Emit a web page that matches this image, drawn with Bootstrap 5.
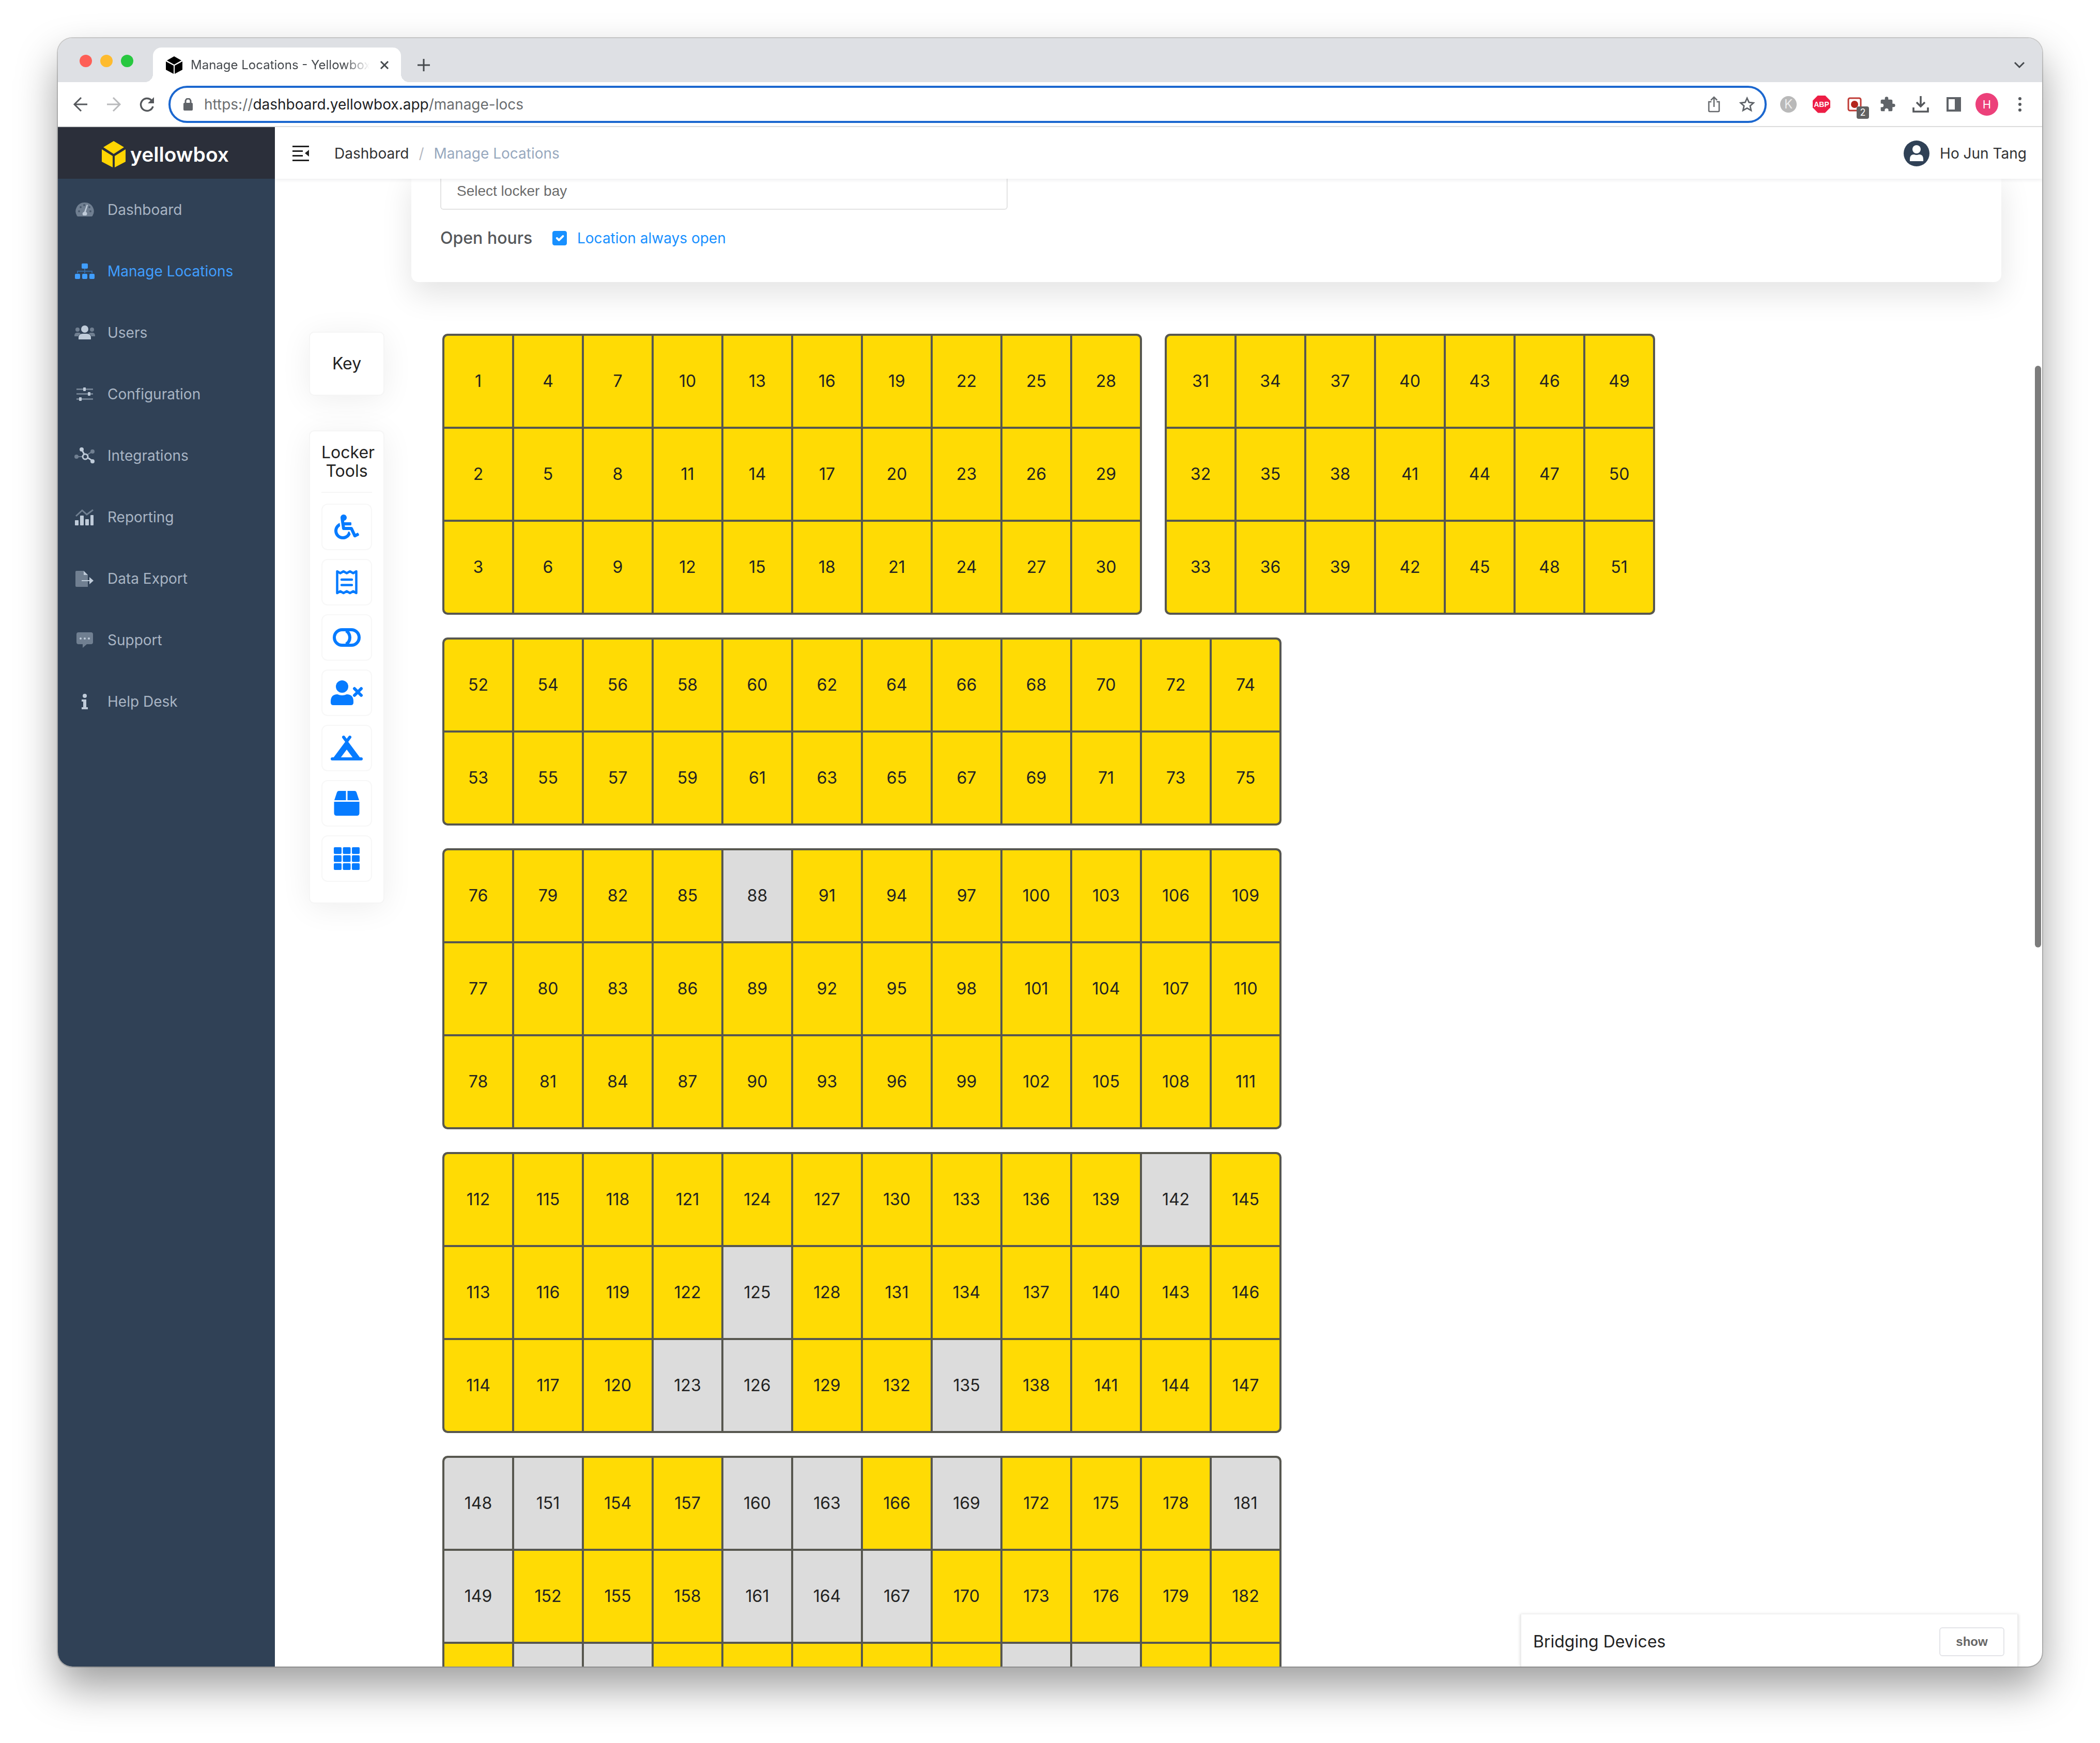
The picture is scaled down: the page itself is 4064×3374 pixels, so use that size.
<!DOCTYPE html>
<html lang="en">
<head>
<meta charset="utf-8">
<meta name="viewport" content="width=device-width, initial-scale=1">
<title>Manage Locations - Yellowbox</title>
<link href="https://cdn.jsdelivr.net/npm/bootstrap@5.3.0/dist/css/bootstrap.min.css" rel="stylesheet">
<style>
  body { font-family: Inter, "Liberation Sans", sans-serif; font-size: 28px; line-height: 36px; color: #303133; background: #fff; }
  svg { display: block; flex: none; }
  button { color: inherit; }
  .desk { height: 100vh; padding: 74px 112px 148px; }
  .win { height: 100%; border-radius: 28px; background: #fff; box-shadow: 0 0 0 2px rgba(0,0,0,.18), 0 40px 80px rgba(0,0,0,.38); }

  /* browser chrome */
  .tabstrip { height: 85px; background: #dee0e4; padding: 18px 26px 0 42px; }
  .lights { gap: 16px; width: 142px; padding-top: 14px; }
  .lights i { width: 24px; height: 24px; border-radius: 50%; }
  .light-close { background: #fe5f57; }
  .light-min { background: #febb2e; }
  .light-max { background: #28c840; }
  .tab { width: 480px; height: 67px; padding: 0 20px 0 25px; background: #fff; border-radius: 16px 16px 0 0; font-size: 24px; color: #45494d; }
  .tab::before, .tab::after { content: ""; position: absolute; bottom: 0; width: 16px; height: 16px; }
  .tab::before { left: -16px; background: radial-gradient(circle at 0 0, transparent 16px, #fff 16px); }
  .tab::after { right: -16px; background: radial-gradient(circle at 100% 0, transparent 16px, #fff 16px); }
  .tab-title { width: 346px; margin-left: 16px; white-space: nowrap; -webkit-mask-image: linear-gradient(90deg, #000 86%, transparent); mask-image: linear-gradient(90deg, #000 86%, transparent); }
  .plain { border: 0; background: none; padding: 0; display: flex; align-items: center; justify-content: center; }
  .newtab { width: 88px; height: 67px; }
  .tabsearch { width: 36px; height: 67px; }
  .toolbar { height: 87px; border-bottom: 2px solid #dcdcdc; }
  .navbtns { width: 214px; padding-left: 28px; gap: 32px; }
  .navbtns .plain { width: 32px; }
  .omnibox { height: 72px; border: 4px solid #1b67cf; border-radius: 36px; padding: 0 2px 0 25px; color: #6a6d70; }
  .omnibox b { font-weight: 400; color: #202124; }
  .omnibox .url { margin-left: 22px; }
  .exts { padding: 0 11px 0 10px; }
  .cell64 { width: 64px; height: 64px; position: relative; display: flex; align-items: center; justify-content: center; flex: none; }
  .kbadge { width: 32px; height: 32px; border-radius: 50%; background: #b9b9b9; color: #eee; font-size: 24px; text-align: center; line-height: 32px; }
  .abp { width: 34px; height: 34px; background: #ed1e45; color: #fff; font: bold 14px/34px "Liberation Sans", sans-serif; text-align: center; clip-path: polygon(30% 0,70% 0,100% 30%,100% 70%,70% 100%,30% 100%,0 70%,0 30%); }
  .cnt { position: absolute; left: 36px; top: 36px; width: 24px; height: 24px; border-radius: 4px; background: #616161; color: #fff; font-size: 18px; line-height: 24px; text-align: center; }
  .avatar-h { width: 44px; height: 44px; border-radius: 50%; background: #ec407a; color: #fff; font-size: 22px; line-height: 44px; text-align: center; }

  /* application */
  .appbody, .appmain, .scrolled { min-height: 0; min-width: 0; }
  .side { width: 420px; background: #304156; }
  .brand { height: 100px; background: #2b2f3a; color: #fff; font-size: 39px; font-weight: 600; padding: 6px 0 0 84px; gap: 8px; }
  .side a.item { height: 119px; padding-left: 32px; gap: 24px; color: #a9b5c4; text-decoration: none; }
  .side a.item.active { color: #409eff; }
  .dim { opacity: .45; }
  .topbar { height: 100px; padding: 2px 30px 0 34px; background: #fff; z-index: 2; box-shadow: 0 2px 8px rgba(0,21,41,.08); }
  .topbar a { color: #303133; text-decoration: none; }
  .user { gap: 20px; }
  .crumbs { margin-left: 49px; gap: 19px; }
  .crumbs .sep { color: #b5b9c2; }
  .crumbs .here { color: #97a8be; }
  .shade { box-shadow: 0 8px 60px rgba(0,0,0,.07); border: 2px solid #f5f5f5; background: #fff; border-radius: 10px; }
  .scrolled { margin-top: -16px; }
  .settings { margin: 0 79px 0 264px; padding: 0 56px 66px; border-radius: 14px; border: 0; box-shadow: 0 24px 60px rgba(0,0,0,.11); }
  .bay { width: 1098px; max-width: 100%; height: 76px; border: 2px solid #e3e3e3; border-radius: 6px; padding: 4px 30px 0; font: 28px/36px "Liberation Sans", sans-serif; color: #606266; }
  .bay::placeholder { color: #6b6b6b; opacity: 1; }
  .open { padding-top: 36px; box-sizing: content-box; height: 38px; }
  .open-title { font-size: 32px; color: #55575a; width: 217px; font-weight: 500; }
  .form-check-input.always { width: 28px; height: 28px; margin: 0 20px 0 0; border-radius: 4px; flex: none; }
  .form-check-input.always:checked { background-color: #1890ff; border-color: #1890ff; }
  .always-label { color: #1890ff; }
  .board { padding: 96px 66px 0; gap: 112px; }
  .rail { width: 146px; color: #222; font-size: 32px; text-align: center; flex: none; gap: 67px; }
  .keycard { height: 124px; line-height: 120px; }
  .tools { padding: 23px 22px 40px; }
  .tools-title { line-height: 36px; padding-bottom: 22px; border-bottom: 2px solid #f5f5f5; margin-bottom: 21px; }
  .tools .stack { gap: 17px; }
  .tool { height: 90px; background: #fff; border: 2px solid #f7f7f7; border-radius: 12px; color: #067bff; padding: 0; }
  .bays { padding-top: 4px; gap: 44px; }
  .bayrow { gap: 44px; }
  .bank { display: grid; grid-auto-flow: column; grid-auto-columns: 131px; grid-auto-rows: 176px; gap: 4px; padding: 4px; background: #57574f; border-radius: 10px; }
  .locker { background: #ffdb04; color: #222; font-size: 32px; display: flex; align-items: center; justify-content: center; }
  .locker.off { background: #dcdcdc; }
  .bank .locker.tl { border-top-left-radius: 7px; } .bank .locker.bl { border-bottom-left-radius: 7px; }
  .bank .locker.tr { border-top-right-radius: 7px; } .bank .locker.br { border-bottom-right-radius: 7px; }
  .bridging { position: absolute; right: 46px; bottom: 0; width: 964px; height: 101px; padding: 4px 25px 0 23px; background: #fff; border: solid #ececec; border-width: 0 2px; box-shadow: 0 0 6px rgba(0,0,0,.15); font-size: 32px; color: #222; z-index: 3; }
  .show-btn { width: 126px; height: 56px; border: 2px solid #e3e4e8; border-radius: 6px; background: #fff; color: #666; font: bold 24px/28px "Liberation Sans", sans-serif; }
  .thumb { position: absolute; right: 2px; top: 462px; width: 12px; height: 1126px; border-radius: 6px; background: #7c7c7c; z-index: 3; }
</style>
</head>
<body>
<div class="desk">
<div class="win d-flex flex-column overflow-hidden">

  <div class="tabstrip d-flex flex-shrink-0">
    <div class="lights d-flex"><i class="light-close"></i><i class="light-min"></i><i class="light-max"></i></div>
    <div class="tab position-relative d-flex align-items-center">
      <svg width="32" height="34" viewBox="0 0 32 34"><path d="M16 0 30 8 16 16 2 8ZM0 10l15 8v16L0 26ZM32 10l-15 8v16l15-8Z" fill="#000"/></svg>
      <div class="tab-title">Manage Locations - Yellowbox</div>
      <button class="plain ms-auto" aria-label="Close tab"><svg width="24" height="24" viewBox="0 0 24 24" stroke="#45494d" stroke-width="3"><path d="M5 5l14 14M19 5 5 19"/></svg></button>
    </div>
    <button class="plain newtab" aria-label="New tab"><svg width="26" height="26" viewBox="0 0 26 26" stroke="#45494d" stroke-width="3"><path d="M13 1v24M1 13h24"/></svg></button>
    <button class="plain tabsearch ms-auto" aria-label="Search tabs"><svg width="24" height="24" viewBox="0 0 24 24" fill="none" stroke="#45494d" stroke-width="3"><path d="M3 7l9 9 9-9"/></svg></button>
  </div>

  <div class="toolbar d-flex align-items-center flex-shrink-0">
    <div class="navbtns d-flex">
      <button class="plain" aria-label="Back"><svg width="32" height="32" viewBox="0 0 32 32" fill="none" stroke="#55585c" stroke-width="3"><path d="M29 16H4M17 3 4 16l13 13"/></svg></button>
      <button class="plain" aria-label="Forward"><svg width="32" height="32" viewBox="0 0 32 32" fill="none" stroke="#b9babc" stroke-width="3"><path d="M3 16h25M15 3l13 13-13 13"/></svg></button>
      <button class="plain" aria-label="Reload"><svg width="32" height="32" viewBox="0 0 32 32" fill="none" stroke="#55585c" stroke-width="3.500"><path d="M28 20a12 12 0 1 1-3-12"/><path d="M30 2v12H18Z" fill="#55585c" stroke="none"/></svg></button>
    </div>
    <div class="omnibox flex-grow-1 d-flex align-items-center">
      <svg width="18" height="24" viewBox="0 0 18 24"><path d="M4 10V6a5 5 0 0 1 10 0v4" fill="none" stroke="#5f6368" stroke-width="3"/><rect y="9" width="18" height="15" rx="2" fill="#5f6368"/></svg>
      <div class="url">https://<b>dashboard.yellowbox.app</b>/manage-locs</div>
      <span class="cell64 ms-auto"><svg width="24" height="32" viewBox="0 0 24 32" fill="none" stroke="#66696d" stroke-width="2.600"><path d="M7 11H2v17q0 2 2 2h16q2 0 2-2V11h-5M12 21V3M6 8l6-6 6 6"/></svg></span>
      <span class="cell64"><svg width="30" height="30" viewBox="0 0 30 30" fill="none" stroke="#5f6368" stroke-width="2.800"><path d="M15 3l3.700 8.200 8.800.9-6.600 5.900 1.900 8.800L15 22.300 7.200 26.800l1.900-8.800L2.500 12.100l8.800-.9Z"/></svg></span>
    </div>
    <div class="exts d-flex align-items-center">
      <span class="cell64"><span class="kbadge">K</span></span>
      <span class="cell64"><span class="abp">ABP</span></span>
      <span class="cell64"><svg width="28" height="28" viewBox="0 0 28 28"><rect x="2" y="2" width="24" height="24" rx="3" fill="#fff" stroke="#bf3a34" stroke-width="3"/><circle cx="14" cy="14" r="7" fill="#b3261e"/></svg><span class="cnt">2</span></span>
      <span class="cell64"><svg width="32" height="32" viewBox="0 0 24 24" fill="#5f6368"><path d="M20.500 11H19V7a2 2 0 0 0-2-2h-4V3.500a2.500 2.500 0 0 0-5 0V5H4a2 2 0 0 0-2 2v3.800h1.500a2.700 2.700 0 0 1 0 5.400H2V20a2 2 0 0 0 2 2h3.800v-1.500a2.700 2.700 0 0 1 5.400 0V22H17a2 2 0 0 0 2-2v-4h1.500a2.500 2.500 0 0 0 0-5Z"/></svg></span>
      <span class="cell64"><svg width="32" height="32" viewBox="0 0 32 32" fill="none" stroke="#55585c" stroke-width="3.600"><path d="M16 0v19M8 12l8 8 8-8M2 22v8h28v-8"/></svg></span>
      <span class="cell64"><svg width="28" height="28" viewBox="0 0 28 28"><rect width="28" height="28" fill="#5f6368"/><rect x="4" y="4" width="12" height="20" fill="#fff"/></svg></span>
      <span class="cell64"><span class="avatar-h">H</span></span>
      <span class="cell64"><svg width="6" height="28" viewBox="0 0 6 28" fill="#55585c"><circle cx="3" cy="3" r="3"/><circle cx="3" cy="14" r="3"/><circle cx="3" cy="25" r="3"/></svg></span>
    </div>
  </div>

  <div class="appbody d-flex flex-grow-1 position-relative">
    <nav class="side flex-shrink-0">
      <div class="brand d-flex align-items-center">
        <svg width="48" height="52" viewBox="0 0 48 52" fill="#ffd502"><path d="M24 0 44 12 24 25 4 12ZM1 16l21 13v22L1 40ZM47 16 26 29v22l21-11Z"/></svg>
        <span>yellowbox</span>
      </div>
      <a class="item d-flex align-items-center" href="#"><svg width="40" height="34" viewBox="0 0 40 34" fill="#bfcbd9"><path class="dim" d="M20 3A17 17 0 0 0 5 29q1 1 2 1h26q1 0 2-1A17 17 0 0 0 20 3Z"/><path d="M24 7l2 1-4 13a4 4 0 0 1 1 7h-6a4 4 0 0 1 2-7Z"/><g fill="#304156" opacity=".6"><circle cx="9" cy="20" r="2"/><circle cx="12" cy="12" r="2"/><circle cx="31" cy="20" r="2"/><circle cx="29" cy="12" r="2"/><circle cx="19" cy="8" r="2"/></g></svg>Dashboard</a>
      <a class="item active d-flex align-items-center" href="#" aria-current="page"><svg width="40" height="34" viewBox="0 0 40 34" fill="#409eff"><path class="dim" d="M19 11h2v5h14v5h-2v-3H21v3h-2v-3H7v3H5v-5h14Z"/><rect x="14" y="2" width="12" height="10" rx="2"/><rect x="1" y="22" width="10" height="10" rx="2"/><rect x="15" y="22" width="10" height="10" rx="2"/><rect x="29" y="22" width="10" height="10" rx="2"/></svg>Manage Locations</a>
      <a class="item d-flex align-items-center" href="#"><svg width="40" height="34" viewBox="0 0 40 34" fill="#bfcbd9"><g class="dim"><circle cx="6" cy="11" r="4"/><circle cx="34" cy="11" r="4"/><path d="M0 23q0-6 5-6h4q2 0 3 2-4 2-5 5H0ZM40 23q0-6-5-6h-4q-2 0-3 2 4 2 5 5h7Z"/></g><circle cx="20" cy="10" r="7"/><path d="M8 30v-3q0-8 8-8h8q8 0 8 8v3Z"/></svg>Users</a>
      <a class="item d-flex align-items-center" href="#"><svg width="40" height="34" viewBox="0 0 40 34" fill="#bfcbd9"><path class="dim" d="M4 6h32v3H4ZM4 15h32v3H4ZM4 25h32v3H4Z"/><rect x="17" y="4" width="5" height="7" rx="1"/><rect x="26" y="13" width="5" height="7" rx="1"/><rect x="9" y="23" width="5" height="7" rx="1"/></svg>Configuration</a>
      <a class="item d-flex align-items-center" href="#"><svg width="40" height="34" viewBox="0 0 40 34" fill="#bfcbd9"><g class="dim"><circle cx="4" cy="19" r="4"/><circle cx="35" cy="9" r="4"/><path d="M4 18h14v2H4ZM22 16l12-8 1 2-12 8Z"/></g><path d="M14 5l7 13 14 9" fill="none" stroke="#bfcbd9" stroke-width="3"/><circle cx="14" cy="5" r="4"/><circle cx="35" cy="28" r="4"/><circle cx="21" cy="19" r="5" fill="#304156" stroke="#bfcbd9" stroke-width="3"/></svg>Integrations</a>
      <a class="item d-flex align-items-center" href="#"><svg width="40" height="34" viewBox="0 0 40 34" fill="#bfcbd9"><path class="dim" d="M3 15 15 4l9 8L36 3" fill="none" stroke="#bfcbd9" stroke-width="3"/><rect x="1" y="23" width="7" height="10" rx="1"/><rect x="11" y="14" width="7" height="19" rx="1"/><rect x="21" y="21" width="7" height="12" rx="1"/><rect x="31" y="13" width="6" height="20" rx="1"/></svg>Reporting</a>
      <a class="item d-flex align-items-center" href="#"><svg width="40" height="34" viewBox="0 0 40 34" fill="#bfcbd9"><path class="dim" d="M4 2h14v8h8v23H4q-2 0-2-2V4q0-2 2-2Z"/><path d="M18 2l8 8h-8ZM14 20h15v-6l8 7-8 7v-6H14Z"/></svg>Data Export</a>
      <a class="item d-flex align-items-center" href="#"><svg width="40" height="34" viewBox="0 0 40 34" fill="#bfcbd9"><path class="dim" d="M8 2h24q4 0 4 4v15q0 4-4 4h-8l-8 7v-7H8q-4 0-4-4V6q0-4 4-4Z"/><circle cx="12" cy="14" r="2"/><circle cx="20" cy="14" r="2"/><circle cx="28" cy="14" r="2"/></svg>Support</a>
      <a class="item d-flex align-items-center" href="#"><svg width="40" height="34" viewBox="0 0 40 34" fill="#bfcbd9"><circle cx="20" cy="6" r="4"/><path d="M14 13h9v15h3v4H14v-4h3V17h-3Z"/></svg>Help Desk</a>
    </nav>

    <main class="appmain d-flex flex-column flex-grow-1 overflow-hidden">
      <header class="topbar d-flex align-items-center flex-shrink-0">
        <button class="plain" aria-label="Collapse menu"><svg width="32" height="30" viewBox="0 0 32 30" fill="#222"><path d="M0 0h32v3H0ZM0 9h20v3H0ZM0 18h20v3H0ZM0 27h32v3H0ZM32 8v13l-8-6.500Z"/></svg></button>
        <div class="crumbs d-flex"><a href="#">Dashboard</a><span class="sep">/</span><span class="here">Manage Locations</span></div>
        <a class="user d-flex align-items-center ms-auto" href="#"><svg width="50" height="50" viewBox="0 0 50 50"><circle cx="25" cy="25" r="25" fill="#304156"/><circle cx="25" cy="17" r="8" fill="#fff"/><path d="M12 40V36q0-9 8-9 5 2 10 0 8 0 8 9v4Z" fill="#fff"/></svg>Ho Jun Tang</a>
      </header>

      <div class="scrolled flex-grow-1">
        <section class="shade settings">
          <input class="bay d-block" type="text" placeholder="Select locker bay" aria-label="Select locker bay">
          <div class="open d-flex align-items-center">
            <span class="open-title">Open hours</span>
            <input class="form-check-input always" type="checkbox" id="always" checked>
            <label class="always-label" for="always">Location always open</label>
          </div>
        </section>

        <div class="board d-flex align-items-start">
          <aside class="rail d-flex flex-column">
            <div class="shade keycard">Key</div>
            <div class="shade tools">
              <div class="tools-title">Locker Tools</div>
              <div class="stack d-flex flex-column">
                <button class="tool d-flex align-items-center justify-content-center" aria-label="Accessible"><svg width="48" height="48" viewBox="0 0 512 512" fill="currentColor"><path d="M496.101 385.669l14.227 28.663c3.929 7.915.697 17.516-7.218 21.445l-65.465 32.886c-16.049 7.967-35.556 1.194-43.189-15.055L331.679 320H192c-15.925 0-29.426-11.710-31.679-27.475C126.433 55.308 128.380 70.044 128 64c0-36.358 30.318-65.635 67.052-63.929 33.271 1.545 60.048 28.905 60.925 62.201.868 32.933-23.152 60.423-54.608 65.039l4.670 32.690H336c8.837 0 16 7.163 16 16v32c0 8.837-7.163 16-16 16H215.182l4.572 32H352a32 32 0 0 1 28.962 18.392L438.477 396.800l36.178-18.349c7.915-3.929 17.517-.697 21.446 7.218zM311.358 352h-24.506c-7.788 54.204-54.528 96-110.852 96-61.757 0-112-50.243-112-112 0-41.505 22.694-77.809 56.324-97.156-3.712-25.965-6.844-47.860-9.488-66.333C45.956 198.464 0 261.963 0 336c0 97.047 78.953 176 176 176 71.870 0 133.806-43.308 161.110-105.302L311.358 352z"/></svg></button>
                <button class="tool d-flex align-items-center justify-content-center" aria-label="Rates"><svg width="42" height="48" viewBox="0 0 42 48" fill="none" stroke="currentColor" stroke-width="4.500" stroke-linejoin="round" stroke-linecap="round"><path d="M2.500 3l6 3.500L14.700 3 21 6.500 27.300 3l6.200 3.500 6-3.500v42l-6-3.500-6.200 3.500L21 41.500 14.700 45l-6.200-3.500-6 3.500ZM11 19h20M11 29.500h20"/></svg></button>
                <button class="tool d-flex align-items-center justify-content-center" aria-label="Toggle"><svg width="54" height="36" viewBox="0 0 54 36" fill="none" stroke="currentColor" stroke-width="6"><rect x="3" y="3" width="48" height="30" rx="15"/><path d="M26 5q7 5 7 13t-7 13"/></svg></button>
                <button class="tool d-flex align-items-center justify-content-center" aria-label="Remove user"><svg width="62" height="48" viewBox="0 0 62 48" fill="currentColor"><circle cx="22" cy="12" r="12"/><path d="M0 43v-2q0-14 13-14 9 4 18 0 13 0 13 14v2q0 5-5 5H5q-5 0-5-5Z"/><path d="M46 16l13 13M59 16 46 29" stroke="currentColor" stroke-width="6" stroke-linecap="round"/></svg></button>
                <button class="tool d-flex align-items-center justify-content-center" aria-label="Campground"><svg width="62" height="48" viewBox="0 0 62 48" fill="none" stroke="currentColor" stroke-linecap="round"><path d="M25 3l6 8 6-8" stroke-width="6"/><path d="M3 45h56" stroke-width="6"/><path d="M31 8 57 43H43L31 27 19 43H5Z" fill="currentColor" stroke="none"/></svg></button>
                <button class="tool d-flex align-items-center justify-content-center" aria-label="Parcel"><svg width="50" height="48" viewBox="0 0 50 48" fill="currentColor"><path d="M10 0h13.500v18H1L6 3q1-3 4-3ZM40 0H26.500v18H49L44 3q-1-3-4-3ZM.5 21h49v22q0 5-5 5h-39q-5 0-5-5Z"/></svg></button>
                <button class="tool d-flex align-items-center justify-content-center" aria-label="Grid"><svg width="50" height="44" viewBox="0 0 50 44" fill="currentColor"><rect width="15" height="13" rx="2"/><rect x="17.500" width="15" height="13" rx="2"/><rect x="35" width="15" height="13" rx="2"/><rect y="15.500" width="15" height="13" rx="2"/><rect x="17.500" y="15.500" width="15" height="13" rx="2"/><rect x="35" y="15.500" width="15" height="13" rx="2"/><rect y="31" width="15" height="13" rx="2"/><rect x="17.500" y="31" width="15" height="13" rx="2"/><rect x="35" y="31" width="15" height="13" rx="2"/></svg></button>
              </div>
            </div>
          </aside>
          <div class="bays d-flex flex-column" id="bays"></div>
        </div>
      </div>
    </main>

    <section class="bridging d-flex align-items-center justify-content-between"><span>Bridging Devices</span><button class="show-btn">show</button></section>
    <div class="thumb"></div>
  </div>
</div>
</div>

<script>
  // Each row holds banks: [first locker, last locker, lockers per column].
  const rows = [[[1, 30, 3], [31, 51, 3]], [[52, 75, 2]], [[76, 111, 3]], [[112, 147, 3]], [[148, 183, 3]]];
  const off = new Set([88, 123, 125, 126, 135, 142, 148, 149, 151, 153, 156, 160, 161, 163, 164, 167, 169, 174, 177, 181]);
  const bays = document.getElementById('bays');
  const fold = document.querySelector('.win').getBoundingClientRect().bottom;
  for (const row of rows) {
    const line = document.createElement('div');
    line.className = 'bayrow d-flex';
    bays.append(line);
    for (const [from, to, tall] of row) {
      const bank = document.createElement('div');
      bank.className = 'bank';
      bank.style.gridTemplateRows = `repeat(${tall}, 176px)`;
      line.append(bank);
      for (let n = from; n <= to; n++) {
        const c = document.createElement('div');
        c.className = 'locker' + (off.has(n) ? ' off' : '')
          + (n === from ? ' tl' : '') + (n === from + tall - 1 ? ' bl' : '')
          + (n === to - tall + 1 ? ' tr' : '') + (n === to ? ' br' : '');
        bank.append(c);
        // Label only the lockers whose middle lies above the fold.
        const box = c.getBoundingClientRect();
        if (box.top + box.height / 2 < fold) c.textContent = n;
      }
    }
  }
</script>
<script src="https://cdn.jsdelivr.net/npm/bootstrap@5.3.0/dist/js/bootstrap.bundle.min.js"></script>
</body>
</html>
